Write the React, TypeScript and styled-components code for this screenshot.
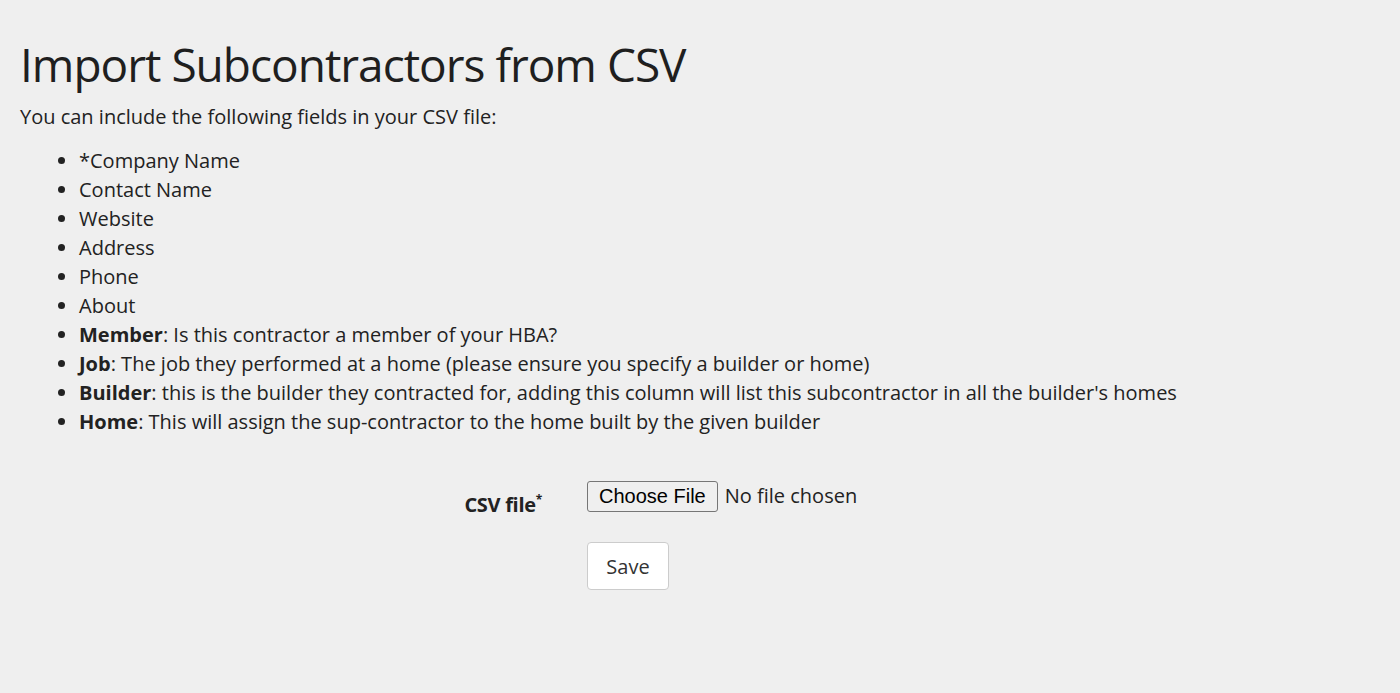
import styled, { createGlobalStyle } from "styled-components";

const GlobalStyle = createGlobalStyle`
  html, body {
    margin: 0;
    padding: 0;
    background: #efefef;
  }
  body {
    font-family: "Open Sans", "Liberation Sans", sans-serif;
    color: #222;
    font-size: 20px;
    line-height: 29px;
  }
`;

const Page = styled.div`
  padding: 33px 20px 40px;
`;

const Title = styled.h1`
  margin: 0 0 7px;
  font-size: 46px;
  line-height: 62px;
  font-weight: 400;
  letter-spacing: -1px;
  color: #1f1f1f;
`;

const Intro = styled.p`
  margin: 0 0 15px;
`;

const FieldList = styled.ul`
  margin: 0 0 45px;
  padding-left: 59px;
  li {
    line-height: 29px;
  }
  b {
    font-weight: 700;
  }
`;

const FormRow = styled.div`
  display: grid;
  grid-template-columns: 522px auto;
  column-gap: 45px;
  align-items: start;
  margin-bottom: 23px;
`;

const Label = styled.label`
  text-align: right;
  font-weight: 700;
  padding-top: 9px;
  line-height: 29px;
  letter-spacing: -0.3px;
  sup {
    font-size: 12px;
    vertical-align: top;
    line-height: 20px;
  }
`;

const FileInput = styled.input`
  font-family: inherit;
  font-size: 20px;
  color: #222;
  height: 32px;
  &::file-selector-button {
    font-family: "Liberation Sans", Arial, sans-serif;
    font-size: 20px;
    color: #000;
    background: #efefef;
    border: 1px solid #767676;
    border-radius: 3px;
    padding: 2px 11px;
    margin-right: 7px;
    height: 31px;
  }
`;

const SaveButton = styled.button`
  font-family: inherit;
  font-size: 20px;
  color: #333;
  background: #fff;
  border: 1px solid #ccc;
  border-radius: 4px;
  width: 82px;
  height: 48px;
  padding: 0;
`;

export default function App() {
  return (
    <>
      <GlobalStyle />
      <Page>
        <Title>Import Subcontractors from CSV</Title>
        <Intro>You can include the following fields in your CSV file:</Intro>
        <FieldList>
          <li>*Company Name</li>
          <li>Contact Name</li>
          <li>Website</li>
          <li>Address</li>
          <li>Phone</li>
          <li>About</li>
          <li>
            <b>Member</b>: Is this contractor a member of your HBA?
          </li>
          <li>
            <b>Job</b>: The job they performed at a home (please ensure you specify a builder or home)
          </li>
          <li>
            <b>Builder</b>: this is the builder they contracted for, adding this column will list this
            subcontractor in all the builder's homes
          </li>
          <li>
            <b>Home</b>: This will assign the sup-contractor to the home built by the given builder
          </li>
        </FieldList>
        <FormRow>
          <Label htmlFor="csv">
            CSV file<sup>*</sup>
          </Label>
          <FileInput id="csv" type="file" accept=".csv" />
        </FormRow>
        <FormRow>
          <span />
          <div>
            <SaveButton type="submit">Save</SaveButton>
          </div>
        </FormRow>
      </Page>
    </>
  );
}
